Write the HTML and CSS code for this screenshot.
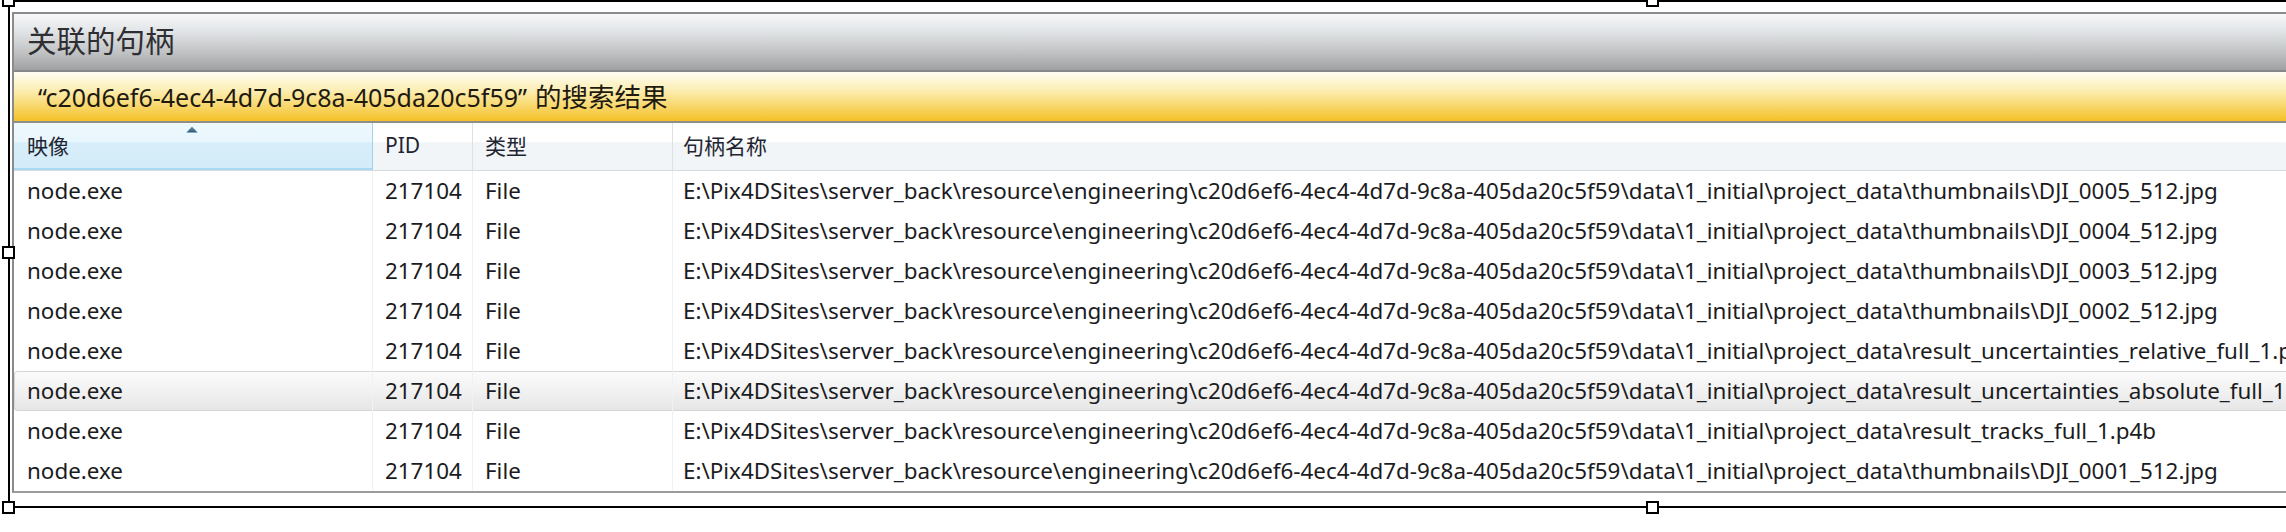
FILE: index.html
```html
<!DOCTYPE html>
<html lang="zh-CN">
<head>
<meta charset="utf-8">
<title>关联的句柄</title>
<link rel="stylesheet" href="styles.css">
</head>
<body>
<div class="frame">
  <div class="panel">
    <div class="title">关联的句柄</div>
    <div class="search">“c20d6ef6-4ec4-4d7d-9c8a-405da20c5f59”<span class="cjk">的搜索结果</span></div>
    <div class="list">
      <div class="row head">
        <div class="cell sorted">映像<svg class="arrow" width="12" height="7" viewBox="0 0 12 7"><defs><linearGradient id="ag" x1="0" y1="0" x2="0" y2="1"><stop offset="0" stop-color="#6f9bbd"/><stop offset="1" stop-color="#2b5676"/></linearGradient></defs><path d="M6 0.5 L11.5 6.5 L0.5 6.5 Z" fill="url(#ag)"/></svg></div>
        <div class="cell latin">PID</div>
        <div class="cell">类型</div>
        <div class="cell">句柄名称</div>
      </div>
      <div class="row"><div class="cell">node.exe</div><div class="cell">217104</div><div class="cell">File</div><div class="cell">E:\Pix4DSites\server_back\resource\engineering\c20d6ef6-4ec4-4d7d-9c8a-405da20c5f59\data\1_initial\project_data\thumbnails\DJI_0005_512.jpg</div></div>
      <div class="row"><div class="cell">node.exe</div><div class="cell">217104</div><div class="cell">File</div><div class="cell">E:\Pix4DSites\server_back\resource\engineering\c20d6ef6-4ec4-4d7d-9c8a-405da20c5f59\data\1_initial\project_data\thumbnails\DJI_0004_512.jpg</div></div>
      <div class="row"><div class="cell">node.exe</div><div class="cell">217104</div><div class="cell">File</div><div class="cell">E:\Pix4DSites\server_back\resource\engineering\c20d6ef6-4ec4-4d7d-9c8a-405da20c5f59\data\1_initial\project_data\thumbnails\DJI_0003_512.jpg</div></div>
      <div class="row"><div class="cell">node.exe</div><div class="cell">217104</div><div class="cell">File</div><div class="cell">E:\Pix4DSites\server_back\resource\engineering\c20d6ef6-4ec4-4d7d-9c8a-405da20c5f59\data\1_initial\project_data\thumbnails\DJI_0002_512.jpg</div></div>
      <div class="row"><div class="cell">node.exe</div><div class="cell">217104</div><div class="cell">File</div><div class="cell">E:\Pix4DSites\server_back\resource\engineering\c20d6ef6-4ec4-4d7d-9c8a-405da20c5f59\data\1_initial\project_data\result_uncertainties_relative_full_1.p4b</div></div>
      <div class="row hot"><div class="cell">node.exe</div><div class="cell">217104</div><div class="cell">File</div><div class="cell">E:\Pix4DSites\server_back\resource\engineering\c20d6ef6-4ec4-4d7d-9c8a-405da20c5f59\data\1_initial\project_data\result_uncertainties_absolute_full_1.p4b</div></div>
      <div class="row"><div class="cell">node.exe</div><div class="cell">217104</div><div class="cell">File</div><div class="cell">E:\Pix4DSites\server_back\resource\engineering\c20d6ef6-4ec4-4d7d-9c8a-405da20c5f59\data\1_initial\project_data\result_tracks_full_1.p4b</div></div>
      <div class="row"><div class="cell">node.exe</div><div class="cell">217104</div><div class="cell">File</div><div class="cell">E:\Pix4DSites\server_back\resource\engineering\c20d6ef6-4ec4-4d7d-9c8a-405da20c5f59\data\1_initial\project_data\thumbnails\DJI_0001_512.jpg</div></div>
    </div>
  </div>
  <span class="handle h-tl"></span>
  <span class="handle h-tm"></span>
  <span class="handle h-ml"></span>
  <span class="handle h-bl"></span>
  <span class="handle h-bm"></span>
</div>
</body>
</html>
```

FILE: styles.css
```css
html, body {
  margin: 0;
  padding: 0;
  overflow: hidden;
  background: #ffffff;
  width: 2286px;
  height: 532px;
}

body {
  font-family: "Noto Sans", "Noto Sans CJK SC", sans-serif;
  color: #1b1b22;
}

.frame {
  position: relative;
  margin-left: 8px;
  width: 3286px;
  border: 2px solid #000;
  padding: 10px 0 13px 2px;
}

.panel {
  border-top: 2px solid #8a8b8d;
  border-left: 2px solid #8a8b8d;
  border-bottom: 2px solid #9b9c9e;
  background: #fff;
}

.title {
  line-height: 50px;
  padding-left: 13px;
  font-family: "Noto Sans CJK SC", sans-serif;
  font-size: 29.5px;
  color: #2e2e33;
  background: linear-gradient(to bottom, #f6f8f9 0%, #e2e5e7 30%, #c4c6c8 65%, #a0a1a3 100%);
  border-bottom: 2px solid #86878a;
  box-sizing: border-box;
  height: 58px;
}

.search {
  height: 49px;
  line-height: 47px;
  padding-left: 24px;
  font-size: 25px;
  color: #1f1a10;
  background: linear-gradient(to bottom, #fffdf2 0%, #fcefb8 35%, #f8d76a 70%, #f4c027 100%);
  border-bottom: 2px solid #8f8e8a;
}

.search .cjk {
  font-family: "Noto Sans CJK SC", sans-serif;
  font-size: 26.5px;
  margin-left: 8px;
}

.list {
  display: flex;
  flex-direction: column;
}

.row {
  display: grid;
  grid-template-columns: 359px 100px 200px 1fr;
  height: 40px;
  line-height: 40px;
  font-size: 22.4px;
  white-space: nowrap;
}

.row .cell {
  padding-left: 12px;
  overflow: hidden;
  border-right: 1px solid #eef1f5;
}

.row .cell:first-child {
  padding-left: 13px;
}

.row .cell:last-child {
  border-right: none;
  padding-left: 10px;
}

.head {
  height: 48px;
  line-height: 44px;
  box-sizing: border-box;
  background: linear-gradient(to bottom, #ffffff 0%, #ffffff 40%, #f2f5f8 42%, #f2f5f8 100%);
  border-bottom: 1px solid #d7dbe0;
  font-family: "Noto Sans CJK SC", "Noto Sans", sans-serif;
  font-size: 21px;
  color: #1e2430;
}

.head .cell {
  border-right: 1px solid #dde1e6;
  position: relative;
}

.head .cell.sorted {
  background: linear-gradient(to bottom, #eef9fe 0%, #e8f6fd 40%, #d7eefa 42%, #d4ecf9 100%);
  border-right: 1px solid #9fd3ef;
  box-shadow: inset 0 -2px 0 #a8d8f2;
}

.head .cell.latin {
  font-family: "Noto Sans", sans-serif;
}

.arrow {
  position: absolute;
  left: 172px;
  top: 3px;
}

.hot {
  background: linear-gradient(to bottom, #fbfbfb 0%, #f1f1f1 50%, #e6e6e6 100%);
  box-shadow: inset 0 0 0 1px #d6d6d6;
  border-radius: 4px;
}

.handle {
  position: absolute;
  width: 9px;
  height: 9px;
  border: 2px solid #000;
  background: #fff;
}

.h-tl { left: -8px; top: -8px; }
.h-tm { left: 1636px; top: -8px; }
.h-ml { left: -8px; top: 244px; }
.h-bl { left: -8px; bottom: -8px; }
.h-bm { left: 1636px; bottom: -8px; }
```
